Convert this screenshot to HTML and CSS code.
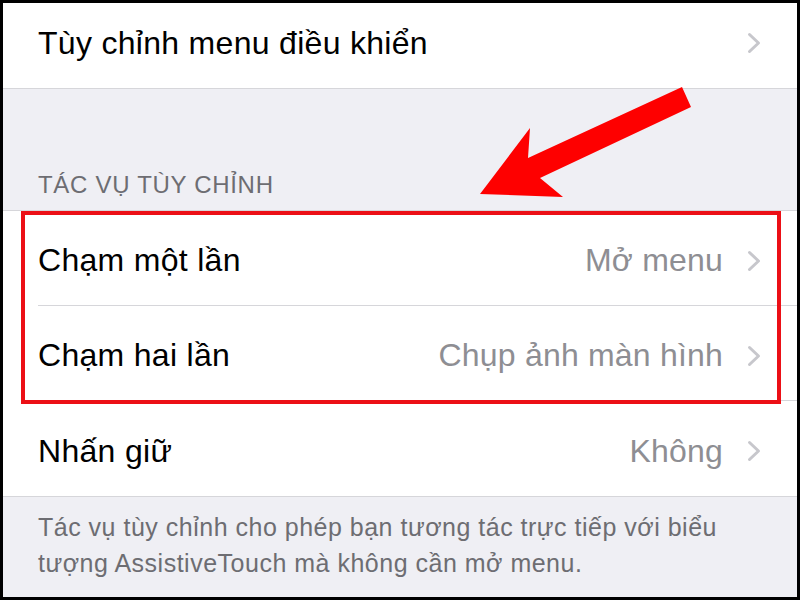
FILE: index.html
```html
<!DOCTYPE html>
<html lang="vi">
<head>
  <meta charset="UTF-8">
  <meta name="viewport" content="width=device-width, initial-scale=1.0">
  <title>AssistiveTouch</title>
  <link rel="stylesheet" href="styles.css">
</head>
<body>
  <div class="page">
    <div class="screen">
      <div class="group group-top">
        <div class="row">
          <div class="row-inner">
            <span class="label">Tùy chỉnh menu điều khiển</span>
            <span class="chevron"><svg width="14" height="22" viewBox="0 0 14 22"><polyline points="2.5,2.5 11.5,11 2.5,19.5" /></svg></span>
          </div>
        </div>
      </div>

      <div class="section-header">TÁC VỤ TÙY CHỈNH</div>

      <div class="group">
        <div class="row">
          <div class="row-inner">
            <span class="label">Chạm một lần</span>
            <span class="value">Mở menu</span>
            <span class="chevron"><svg width="14" height="22" viewBox="0 0 14 22"><polyline points="2.5,2.5 11.5,11 2.5,19.5" /></svg></span>
          </div>
        </div>
        <div class="row">
          <div class="row-inner">
            <span class="label">Chạm hai lần</span>
            <span class="value">Chụp ảnh màn hình</span>
            <span class="chevron"><svg width="14" height="22" viewBox="0 0 14 22"><polyline points="2.5,2.5 11.5,11 2.5,19.5" /></svg></span>
          </div>
        </div>
        <div class="row">
          <div class="row-inner">
            <span class="label">Nhấn giữ</span>
            <span class="value">Không</span>
            <span class="chevron"><svg width="14" height="22" viewBox="0 0 14 22"><polyline points="2.5,2.5 11.5,11 2.5,19.5" /></svg></span>
          </div>
        </div>
      </div>

      <p class="section-footer">Tác vụ tùy chỉnh cho phép bạn tương tác trực tiếp với biểu tượng AssistiveTouch mà không cần mở menu.</p>
    </div>

    <!-- khung đỏ + mũi tên chú thích -->
    <div class="highlight-box"></div>
    <svg class="arrow" width="800" height="600" viewBox="0 0 800 600">
      <polygon points="480,194 530,128 528,158 682,87 691,107 540,178 563,197" />
    </svg>
  </div>
</body>
</html>
```

FILE: styles.css
```css
* {
  margin: 0;
  padding: 0;
  box-sizing: border-box;
}

body {
  font-family: "Liberation Sans", Arial, sans-serif;
  background-color: #000;
}

.page {
  position: relative;
  width: 800px;
  height: 600px;
  padding: 3px;
  background-color: #000;
  overflow: hidden;
}

.screen {
  width: 100%;
  height: 100%;
  background-color: #efeff4;
  overflow: hidden;
}

.group {
  background-color: #fff;
  border-top: 1px solid #d6d6da;
  border-bottom: 1px solid #d6d6da;
}

/* hàng đầu bị cắt ở mép trên */
.group-top {
  margin-top: -10px;
  border-top: none;
}

.row {
  height: 95px;
  padding-left: 35px;
}

.row-inner {
  height: 100%;
  display: flex;
  align-items: center;
  padding: 5px 36px 0 0;
  border-bottom: 1px solid #d6d6da;
}

.row:last-child .row-inner {
  border-bottom: none;
}

.label {
  flex: 1;
  font-size: 32px;
  letter-spacing: 0.3px;
  color: #000;
}

.value {
  font-size: 32px;
  letter-spacing: 0.2px;
  color: #8e8e93;
  margin-right: 24px;
}

.chevron {
  display: flex;
  width: 14px;
  height: 22px;
}

.chevron polyline {
  fill: none;
  stroke: #c7c7cc;
  stroke-width: 3;
  stroke-linecap: round;
  stroke-linejoin: round;
}

.section-header {
  height: 121px;
  display: flex;
  align-items: flex-end;
  padding: 0 35px 11px;
  font-size: 24px;
  line-height: 28px;
  letter-spacing: 0.7px;
  color: #6d6d72;
}

.section-footer {
  padding: 12px 40px 0 35px;
  font-size: 25px;
  line-height: 36px;
  letter-spacing: 0.5px;
  color: #6d6d72;
}

.highlight-box {
  position: absolute;
  left: 21px;
  top: 211px;
  width: 760px;
  height: 193px;
  border: 4px solid #ec0f16;
}

.arrow {
  position: absolute;
  left: 0;
  top: 0;
}

.arrow polygon {
  fill: #fe0000;
}
```
